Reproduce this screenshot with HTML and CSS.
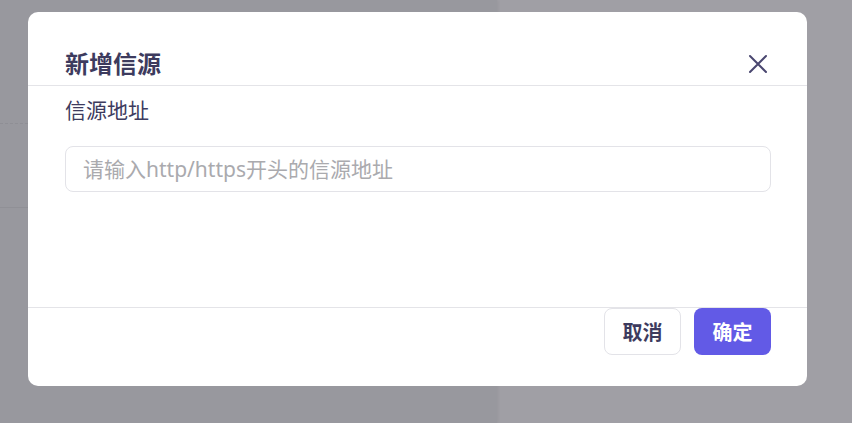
FILE: index.html
```html
<!DOCTYPE html>
<html lang="zh-CN">
<head>
    <meta charset="UTF-8">
    <meta name="viewport" content="width=device-width, initial-scale=1.0">
    <title>新增信源</title>
    <link rel="stylesheet" href="styles.css">
</head>
<body>
    <div class="page">
        <div class="panel-left">
            <div class="panel-top"></div>
            <div class="panel-mid"></div>
        </div>
        <div class="panel-right"></div>
    </div>
    <div class="modal">
        <div class="modal-header">
            <h2>新增信源</h2>
            <button class="close" aria-label="关闭">
                <svg width="20" height="20" viewBox="0 0 20 20">
                    <path d="M2 2 L18 18 M18 2 L2 18" stroke="#4a4770" stroke-width="2" stroke-linecap="round" fill="none"/>
                </svg>
            </button>
        </div>
        <div class="modal-body">
            <label for="url">信源地址</label>
            <input type="text" id="url" placeholder="请输入http/https开头的信源地址">
        </div>
        <div class="modal-footer">
            <button class="btn btn-cancel">取消</button>
            <button class="btn btn-ok">确定</button>
        </div>
    </div>
</body>
</html>
```

FILE: styles.css
```css
body {
    margin: 0;
    font-family: "Noto Sans", "Noto Sans CJK SC", sans-serif;
    background-color: #a09fa5;
    width: 852px;
    height: 423px;
    overflow: hidden;
    position: relative;
}
.page {
    display: flex;
    height: 423px;
}
.panel-left {
    width: 497px;
    background-color: #98989e;
    box-shadow: 1px 0 3px rgba(0, 0, 0, 0.06);
    display: flex;
    flex-direction: column;
}
.panel-top {
    height: 123px;
    border-bottom: 1px dashed #8f8f95;
}
.panel-mid {
    height: 83px;
    border-bottom: 1px solid #909096;
}
.panel-right {
    flex: 1;
}
.modal {
    position: absolute;
    left: 28px;
    top: 12px;
    width: 779px;
    height: 374px;
    background: #fff;
    border-radius: 10px;
    display: flex;
    flex-direction: column;
    color: #3d3b5e;
}
.modal-header {
    display: flex;
    justify-content: space-between;
    align-items: center;
    height: 73px;
    padding: 0 39px 0 37px;
    border-bottom: 1px solid #e4e4e8;
}
.modal-header h2 {
    margin: 28px 0 0;
    font-size: 24px;
    font-weight: 700;
}
.close {
    border: none;
    background: none;
    padding: 0;
    margin-top: 31px;
    width: 20px;
    height: 20px;
    cursor: pointer;
}
.close svg {
    display: block;
}
.modal-body {
    flex: 1;
    padding: 9px 36px 0 37px;
    display: flex;
    flex-direction: column;
}
.modal-body label {
    font-size: 21px;
    line-height: 30px;
    margin-bottom: 21px;
}
.modal-body input {
    height: 46px;
    box-sizing: border-box;
    border: 1px solid #e3e3e8;
    border-radius: 8px;
    padding: 0 17px;
    font-family: inherit;
    font-size: 21px;
    color: #3d3b5e;
    outline: none;
}
.modal-body input::placeholder {
    color: #aaaaae;
}
.modal-footer {
    border-top: 1px solid #e4e4e8;
    height: 78px;
    display: flex;
    justify-content: flex-end;
    align-items: flex-start;
    gap: 13px;
    padding: 0 36px;
}
.btn {
    width: 77px;
    height: 47px;
    border-radius: 8px;
    font-family: inherit;
    font-size: 20px;
    font-weight: 700;
    cursor: pointer;
}
.btn-cancel {
    background: #fff;
    border: 1px solid #e3e3e8;
    color: #3d3b5e;
}
.btn-ok {
    background: #625ae6;
    border: none;
    color: #fff;
}
```
